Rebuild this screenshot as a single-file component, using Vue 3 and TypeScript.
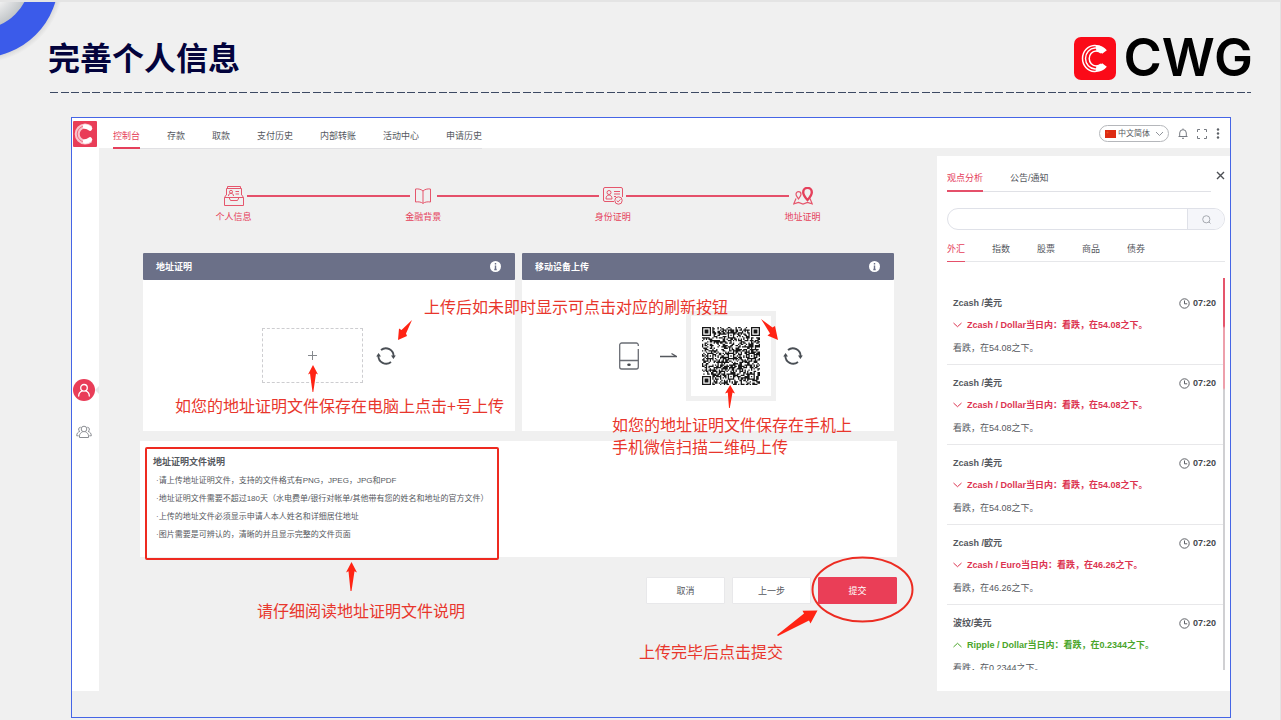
<script setup lang="ts">
import { ref } from 'vue'

interface Insight {
  id: number
  pair: string
  time: string
  headline: string
  detail: string
  up: boolean
}

const navItems: string[] = ['控制台', '存款', '取款', '支付历史', '内部转账', '活动中心', '申请历史']
const activeNav = ref(0)
const language = ref('zh')
const query = ref('')

const panelTabs: string[] = ['观点分析', '公告/通知']
const activePanelTab = ref(0)
const categories: string[] = ['外汇', '指数', '股票', '商品', '债券']
const activeCategory = ref(0)

const steps: { icon: string; label: string }[] = [
  { icon: 'profile', label: '个人信息' },
  { icon: 'book', label: '金融背景' },
  { icon: 'idcard', label: '身份证明' },
  { icon: 'map', label: '地址证明' },
]

const notes: string[] = [
  '请上传地址证明文件，支持的文件格式有PNG，JPEG，JPG和PDF',
  '地址证明文件需要不超过180天（水电费单/银行对帐单/其他带有您的姓名和地址的官方文件）',
  '上传的地址文件必须显示申请人本人姓名和详细居住地址',
  '图片需要是可辨认的，清晰的并且显示完整的文件页面',
]

const insights: Insight[] = [
  { id: 1, pair: 'Zcash /美元', time: '07:20', headline: 'Zcash / Dollar当日内：看跌，在54.08之下。', detail: '看跌，在54.08之下。', up: false },
  { id: 2, pair: 'Zcash /美元', time: '07:20', headline: 'Zcash / Dollar当日内：看跌，在54.08之下。', detail: '看跌，在54.08之下。', up: false },
  { id: 3, pair: 'Zcash /美元', time: '07:20', headline: 'Zcash / Dollar当日内：看跌，在54.08之下。', detail: '看跌，在54.08之下。', up: false },
  { id: 4, pair: 'Zcash /欧元', time: '07:20', headline: 'Zcash / Euro当日内：看跌，在46.26之下。', detail: '看跌，在46.26之下。', up: false },
  { id: 5, pair: '波纹/美元', time: '07:20', headline: 'Ripple / Dollar当日内：看跌，在0.2344之下。', detail: '看跌，在0.2344之下。', up: true },
]

// Square code of 45 modules: three finders, alignment marks, filled data area.
function buildCode(): string {
  const n = 45
  const grid: boolean[][] = []
  let seed = 20117
  for (let y = 0; y < n; y++) {
    grid.push([])
    for (let x = 0; x < n; x++) {
      seed = (seed * 48271) % 2147483647
      grid[y].push(seed / 2147483647 > 0.48)
    }
  }
  const stamp = (cx: number, cy: number, radius: number, isDark: (d: number) => boolean) => {
    for (let y = cy - radius; y <= cy + radius; y++) {
      for (let x = cx - radius; x <= cx + radius; x++) {
        if (x < 0 || y < 0 || x >= n || y >= n) continue
        grid[y][x] = isDark(Math.max(Math.abs(x - cx), Math.abs(y - cy)))
      }
    }
  }
  for (const [x, y] of [[22, 6], [6, 22], [22, 22], [38, 22], [22, 38], [38, 38]]) {
    stamp(x, y, 2, (d) => d !== 1)
  }
  for (const [x, y] of [[3, 3], [41, 3], [3, 41]]) {
    stamp(x, y, 4, (d) => d < 2 || d === 3)
  }
  let path = ''
  grid.forEach((row, y) => row.forEach((dark, x) => {
    if (dark) path += `M${x} ${y}h1v1h-1z`
  }))
  return path
}
const codePath = buildCode()
</script>

<template>
  <div class="slide">
    <svg class="ring" width="72" height="72" viewBox="0 0 72 72" aria-hidden="true">
      <defs>
        <radialGradient id="ringInner" gradientUnits="userSpaceOnUse" cx="-19" cy="-22" r="48">
          <stop offset="0.6" stop-color="#f0f0f0" />
          <stop offset="1" stop-color="#c2c6c9" />
        </radialGradient>
        <radialGradient id="ringOuter" gradientUnits="userSpaceOnUse" cx="-19" cy="-22" r="83">
          <stop offset="0.92" stop-color="#d6d6d6" />
          <stop offset="1" stop-color="#f0f0f0" />
        </radialGradient>
      </defs>
      <circle cx="-19" cy="-22" r="83" fill="url(#ringOuter)" />
      <circle cx="-19" cy="-22" r="50" fill="url(#ringInner)" />
      <circle cx="-19" cy="-22" r="63" fill="none" stroke="#3b5bea" stroke-width="29" />
    </svg>

    <header class="slide-head">
      <h1>完善个人信息</h1>
      <div class="brand">
        <svg width="42" height="43" viewBox="0 0 42 43" aria-hidden="true">
          <rect width="42" height="43" rx="7" fill="#fb0a18" />
          <g fill="none" stroke="#fff">
            <path d="M29 31.500A12.500 13 0 1 1 29 11.500" stroke-width="1.500" />
            <path d="M28 29.500A10 10.500 0 1 1 28 13.500" stroke-width="1.400" />
            <path d="M27 27A7 7.500 0 1 1 27 16" stroke-width="1.500" />
            <path d="M22 11.500C25.500 11 28.500 12.500 30.500 15M22 31.500C25.500 32 28.500 30.500 30.500 28" stroke-width="6" />
          </g>
        </svg>
        <span class="wordmark">CWG</span>
      </div>
    </header>
    <div class="rule"></div>

    <div class="window">
      <aside class="rail">
        <svg width="24" height="26" viewBox="0 0 24 26" aria-hidden="true">
          <rect width="24" height="26" rx="1" fill="#e93d58" />
          <path d="M17.500 7A8 8 0 1 0 17.500 19" fill="none" stroke="#f9c3cc" stroke-width="5" />
          <path d="M17.500 7A8 8 0 1 0 17.500 19" fill="none" stroke="#ee6b80" stroke-width="1" />
          <path d="M12 5.500A8 8 0 0 1 17 7.500M12 20.500A8 8 0 0 0 17 18.500" fill="none" stroke="#fff" stroke-width="4.500" stroke-linecap="round" />
        </svg>
        <button class="rail-btn active" type="button" aria-label="个人">
          <svg width="14" height="14" viewBox="0 0 14 14" fill="none" stroke="#fff" stroke-width="1.300">
            <circle cx="7" cy="4.800" r="3.300" />
            <path d="M1.700 13c0-3 1.800-4.600 3.500-5.200M12.300 13c0-3-1.800-4.600-3.500-5.200" stroke-linecap="round" />
          </svg>
        </button>
        <button class="rail-btn" type="button" aria-label="团队">
          <svg width="16" height="14" viewBox="0 0 16 14" fill="none" stroke="#8b8e93" stroke-width="1">
            <circle cx="8" cy="4" r="2.800" />
            <path d="M3.500 12.500v-1.700c0-2 1.500-3.300 3-3.800M12.500 12.500v-1.700c0-2-1.500-3.300-3-3.800M3.500 12.500h9" />
            <path d="M4.700 2.200a2.200 2.200 0 0 0-.8 4.200C2 7 .7 8.300.7 10.800h2M11.300 2.200a2.200 2.200 0 0 1 .8 4.200c1.900.6 3.200 1.900 3.200 4.400h-2" />
          </svg>
        </button>
      </aside>

      <div class="main">
        <div class="topbar">
          <nav class="nav">
            <a v-for="(item, i) in navItems" :key="item" href="#" :class="{ on: i === activeNav }" @click.prevent="activeNav = i">{{ item }}</a>
          </nav>
          <div class="tools">
            <label class="lang">
              <svg width="11" height="8" viewBox="0 0 11 8" aria-hidden="true">
                <rect width="11" height="8" fill="#dd2c14" />
                <circle cx="2.500" cy="2.500" r="1" fill="#e8541a" />
              </svg>
              <select v-model="language" aria-label="语言">
                <option value="zh">中文简体</option>
              </select>
              <svg width="9" height="6" viewBox="0 0 9 6" fill="none" stroke="#8f9399" aria-hidden="true"><path d="M1 1l3.500 3.500L8 1" /></svg>
            </label>
            <button type="button" aria-label="提醒">
              <svg width="10" height="11" viewBox="0 0 10 11" fill="none" stroke="#777b82"><path d="M.5 8.500h9M1.700 8.500V5a3.300 3.300 0 0 1 6.600 0v3.500M5 .5v1M4 10.300h2" /></svg>
            </button>
            <button type="button" aria-label="全屏">
              <svg width="10" height="10" viewBox="0 0 10 10" fill="none" stroke="#777b82"><path d="M.5 3V.5H3M7 .5h2.500V3M9.500 7v2.500H7M3 9.500H.5V7" /></svg>
            </button>
            <button type="button" aria-label="更多">
              <svg width="4" height="11" viewBox="0 0 4 11" fill="#5c6066"><circle cx="2" cy="1.500" r="1.200" /><circle cx="2" cy="5.500" r="1.200" /><circle cx="2" cy="9.500" r="1.200" /></svg>
            </button>
          </div>
        </div>

        <div class="workspace">
          <main class="center">
            <ol class="steps">
              <li v-for="step in steps" :key="step.label">
                <span class="step-icon">
                  <svg v-if="step.icon === 'profile'" width="20" height="20" viewBox="0 0 20 20" fill="none" stroke="#e5566c">
                    <path d="M2.500 9V2.500h15V9M3.500 2V.5h13V2" />
                    <circle cx="7" cy="5.800" r="1.500" /><path d="M4.500 10c0-1.700 1-2.700 2.500-2.700S9.500 8.300 9.500 10M11.500 5.500h3.500M11.500 8h3.500" />
                    <path d="M.5 11.500L2.500 8.500M19.500 11.500L17.500 8.500M.5 11.500h4.500l1.500 3h7l1.500-3h4.500v8H.5zM5 11.500h10" />
                  </svg>
                  <svg v-else-if="step.icon === 'book'" width="18" height="18" viewBox="0 0 18 18" fill="none" stroke="#e5566c">
                    <path d="M9 4v12M9 4C7.500 2.500 4.500 1.500 1.500 2v13c3-.5 6 0 7.500 1.500M9 4c1.500-1.500 4.500-2.500 7.500-2v13c-3-.5-6 0-7.500 1.500" />
                  </svg>
                  <svg v-else-if="step.icon === 'idcard'" width="20" height="18" viewBox="0 0 20 18" fill="none" stroke="#e5566c">
                    <path d="M11 14.500H2a1.500 1.500 0 0 1-1.500-1.500V2A1.500 1.500 0 0 1 2 .5h16A1.500 1.500 0 0 1 19.500 2v8" />
                    <circle cx="6" cy="5.500" r="2" /><path d="M3 12c0-2.500 1.200-4 3-4s3 1.500 3 4zM11 4.500h6M11 7h6M11 9.500h2" />
                    <circle cx="15.500" cy="13.500" r="3.700" /><path d="M13.700 13.500l1.400 1.400 2.300-2.500" />
                  </svg>
                  <svg v-else width="20" height="18" viewBox="0 0 20 18" fill="none" stroke="#e5566c">
                    <path d="M3 11.500L.8 16.800l4.700-1.300 4.500 1.600 4.500-1.600 4.700 1.300-2.200-5.300" stroke-width="1.200" />
                    <path d="M5.500 12C4 9.800 3 8.700 3 7.200a2.500 2.500 0 0 1 5 0c0 1.500-1 2.600-2.500 4.800z" stroke-width="1.200" />
                    <path d="M14.500 13C11.500 9.700 10.200 7.700 10.200 5.200a4.300 4.300 0 0 1 8.600 0c0 2.500-1.300 4.500-4.300 7.800z" stroke="#e5405b" stroke-width="2.400" />
                  </svg>
                </span>
                <span class="step-line"></span>
                <span class="step-label">{{ step.label }}</span>
              </li>
            </ol>

            <div class="cards">
              <section class="card">
                <div class="card-head">
                  <h2>地址证明</h2>
                  <svg width="11" height="11" viewBox="0 0 11 11" aria-hidden="true"><circle cx="5.500" cy="5.500" r="5.500" fill="#fff" /><path d="M5.500 2v1.500M5.500 4.500v4M4.300 8.500h2.400" stroke="#6b7088" stroke-width="1.400" /></svg>
                </div>
                <div class="card-body">
                  <button class="drop" type="button" aria-label="上传文件">
                    <svg width="9" height="9" viewBox="0 0 9 9" stroke="#85888d"><path d="M4.500 0v9M0 4.500h9" /></svg>
                  </button>
                  <button class="refresh" type="button" aria-label="刷新">
                    <svg width="20" height="18" viewBox="0 0 20 18" fill="none" stroke="#4a4f55" stroke-width="1.900">
                      <path d="M5 3A7.800 7.800 0 0 1 17.600 9.500M15 15A7.800 7.800 0 0 1 2.400 8.500" />
                      <path d="M15 8.500h4.800l-2.400 3.500zM.2 9.500h4.800L2.600 6z" fill="#4a4f55" stroke="none" />
                    </svg>
                  </button>
                </div>
                <p class="tip tip-refresh">上传后如未即时显示可点击对应的刷新按钮</p>
                <svg class="mark mark-refresh" width="15" height="20" viewBox="0 0 15 20" aria-hidden="true"><path d="M14 0L8 13.500 9 16 0 20 1 8.500l2.500 1.500z" fill="#ff2414" /></svg>
                <svg class="mark mark-drop" width="10" height="27" viewBox="0 0 10 27" aria-hidden="true"><path d="M5 0l5 9.500-2-1L5.300 27h-.8L2 8.500 0 9.500z" fill="#ff2414" /></svg>
                <p class="tip tip-drop">如您的地址证明文件保存在电脑上点击+号上传</p>
              </section>

              <section class="card">
                <div class="card-head">
                  <h2>移动设备上传</h2>
                  <svg width="11" height="11" viewBox="0 0 11 11" aria-hidden="true"><circle cx="5.500" cy="5.500" r="5.500" fill="#fff" /><path d="M5.500 2v1.500M5.500 4.500v4M4.300 8.500h2.400" stroke="#6b7088" stroke-width="1.400" /></svg>
                </div>
                <div class="card-body mobile">
                  <svg class="phone" width="20" height="28" viewBox="0 0 20 28" fill="none" stroke="#6a6d74" stroke-width="1.300" aria-hidden="true">
                    <path d="M19.300 4V3a2 2 0 0 0-2-2H2.700a2 2 0 0 0-2 2v22a2 2 0 0 0 2 2h14.600a2 2 0 0 0 2-2V7M.7 18.500h18.600" />
                    <ellipse cx="10" cy="22.800" rx="1.800" ry="1.300" fill="#44474c" stroke="none" />
                  </svg>
                  <svg class="hint" width="17" height="8" viewBox="0 0 17 8" fill="none" stroke="#55585e" stroke-width="1.300" aria-hidden="true"><path d="M0 4.500h16.500L11.500 1.500" /></svg>
                  <div class="code">
                    <svg width="58" height="58" viewBox="0 0 45 45" role="img" aria-label="二维码"><path :d="codePath" fill="#161616" /></svg>
                    <svg class="mark mark-code" width="10" height="23" viewBox="0 0 10 23" aria-hidden="true"><path d="M5.200 0L10 8.500l-2.500-1L4.800 23H4L2.800 7.500 0 8.500z" fill="#ff2414" /></svg>
                  </div>
                  <button class="refresh" type="button" aria-label="刷新">
                    <svg width="20" height="18" viewBox="0 0 20 18" fill="none" stroke="#4a4f55" stroke-width="1.900">
                      <path d="M5 3A7.800 7.800 0 0 1 17.600 9.500M15 15A7.800 7.800 0 0 1 2.400 8.500" />
                      <path d="M15 8.500h4.800l-2.400 3.500zM.2 9.500h4.800L2.600 6z" fill="#4a4f55" stroke="none" />
                    </svg>
                  </button>
                </div>
                <svg class="mark mark-reload" width="18" height="21" viewBox="0 0 18 21" aria-hidden="true"><path d="M0 0l11.500 8.500L14 7l3 14-10.500-4.500L9 14.500z" fill="#ff2414" /></svg>
                <p class="tip tip-code">如您的地址证明文件保存在手机上<br />手机微信扫描二维码上传</p>
              </section>
            </div>

            <section class="notes">
              <h3>地址证明文件说明</h3>
              <ul>
                <li v-for="note in notes" :key="note">·{{ note }}</li>
              </ul>
              <div class="outline">
                <svg class="mark mark-notes" width="11" height="29" viewBox="0 0 11 29" aria-hidden="true"><path d="M5.500 0L11 10.500l-2.500-1.300L5.500 29h-1L2.500 9.200 0 10.500z" fill="#ff2414" /></svg>
                <p class="tip tip-notes">请仔细阅读地址证明文件说明</p>
              </div>
            </section>

            <div class="actions">
              <button type="button">取消</button>
              <button type="button">上一步</button>
              <div class="submit">
                <button class="primary" type="submit">提交</button>
                <svg class="mark mark-ellipse" width="103" height="67" viewBox="0 0 103 67" aria-hidden="true"><ellipse cx="51.500" cy="33.500" rx="50" ry="32" fill="none" stroke="#ec2c22" stroke-width="2" /></svg>
                <svg class="mark mark-submit" width="41" height="26" viewBox="0 0 41 26" aria-hidden="true"><path d="M0 25L27 3.500 25.500.8 40.500.5 33.500 13.500 32 10.500 1 26z" fill="#ff2414" /></svg>
                <p class="tip tip-submit">上传完毕后点击提交</p>
              </div>
            </div>
          </main>

          <aside class="panel">
            <button class="close" type="button" aria-label="关闭">
              <svg width="9" height="9" viewBox="0 0 9 9" stroke="#4c4f54" stroke-width="1.400"><path d="M1 1l7 7M8 1L1 8" /></svg>
            </button>
            <div class="panel-tabs" role="tablist">
              <button v-for="(tab, i) in panelTabs" :key="tab" type="button" role="tab" :class="{ on: i === activePanelTab }" @click="activePanelTab = i">{{ tab }}</button>
            </div>
            <form class="search" @submit.prevent>
              <input v-model="query" type="text" aria-label="搜索" />
              <button type="submit" aria-label="搜索">
                <svg width="9" height="9" viewBox="0 0 9 9" fill="none" stroke="#a6a9b0"><circle cx="4.300" cy="4.300" r="3.600" /><path d="M6.800 6.800L8.500 8.500" /></svg>
              </button>
            </form>
            <div class="categories" role="tablist">
              <button v-for="(cat, i) in categories" :key="cat" type="button" role="tab" :class="{ on: i === activeCategory }" @click="activeCategory = i">{{ cat }}</button>
            </div>
            <div class="feed">
              <ul>
                <li v-for="item in insights" :key="item.id">
                  <div class="feed-head">
                    <strong>{{ item.pair }}</strong>
                    <time>
                      <svg width="11" height="11" viewBox="0 0 11 11" fill="none" stroke="#5c5f65"><circle cx="5.500" cy="5.500" r="4.700" /><path d="M5.500 2.500v3.300h2.700" /></svg>
                      {{ item.time }}
                    </time>
                  </div>
                  <p class="headline" :class="{ up: item.up }">
                    <svg width="9" height="6" viewBox="0 0 9 6" fill="none" stroke="currentColor">
                      <path :d="item.up ? 'M.5 5l4-3.700 4 3.700' : 'M.5 1l4 3.700 4-3.700'" />
                    </svg>
                    {{ item.headline }}
                  </p>
                  <p class="detail">{{ item.detail }}</p>
                </li>
              </ul>
              <span class="track"></span>
            </div>
          </aside>
        </div>
      </div>
    </div>
  </div>
</template>

<style>
body {
  margin: 0;
  background: #f0f0f0;
}
</style>

<style scoped>
.slide {
  position: relative;
  box-sizing: border-box;
  min-height: 100vh;
  display: flex;
  flex-direction: column;
  padding-bottom: 2px;
  overflow: hidden;
  border-top: 2px solid #e4e4e4;
  border-right: 1px solid #e2e2e2;
  background: #f0f0f0;
  color: #55585e;
  font-family: "Liberation Sans", "Noto Sans CJK SC", sans-serif;
  font-size: 9px;
  line-height: 14px;
}
h1, h2, h3, p, ul, ol {
  margin: 0;
  padding: 0;
}
ul, ol {
  list-style: none;
}
svg {
  display: block;
  flex: none;
}
a {
  color: inherit;
  text-decoration: none;
}
button, input, select {
  margin: 0;
  padding: 0;
  border: 0;
  background: none;
  color: inherit;
  font: inherit;
}
.ring {
  position: absolute;
  top: 0;
  left: 0;
}
.slide-head {
  display: flex;
  justify-content: space-between;
  align-items: center;
  height: 90px;
  box-sizing: border-box;
  padding: 22px 27px 0 48px;
}
h1 {
  padding-top: 2px;
  color: #03033c;
  font-size: 32px;
  line-height: 44px;
  font-weight: 700;
}
.brand {
  display: flex;
  align-items: center;
  gap: 8px;
}
.wordmark {
  color: #000;
  font-family: Inter, sans-serif;
  font-size: 52px;
  line-height: 44px;
  font-weight: 600;
}
.rule {
  height: 1px;
  margin: 0 29px 0 50px;
  background: repeating-linear-gradient(90deg, #3c4963 0 8px, transparent 8px 11px, #3c4963 11px 19px, transparent 19px 21px);
}
.window {
  flex: 1;
  display: flex;
  margin: 24px 49px 0 71px;
  padding-bottom: 26px;
  border: 1px solid #4565e6;
  background: #f0f0f0;
}
.rail {
  flex: none;
  width: 27px;
  display: flex;
  flex-direction: column;
  align-items: flex-start;
  box-sizing: border-box;
  padding: 3px 0 0 1px;
  background: #fff;
}
.rail-btn {
  width: 22px;
  height: 22px;
  display: grid;
  place-items: center;
  border-radius: 50%;
}
.rail-btn.active {
  position: relative;
  margin: 232px 0 20px;
  background: #e93d58;
}
.rail-btn.active::after {
  content: "";
  position: absolute;
  left: 22px;
  top: 7px;
  border: 4px solid transparent;
  border-right-color: #e6e6e8;
  border-left: 0;
}
.main {
  flex: 1;
  min-width: 0;
  display: flex;
  flex-direction: column;
}
.topbar {
  display: flex;
  justify-content: space-between;
  height: 31px;
  padding: 0 10px 0 14px;
  background: linear-gradient(#fff 30px, transparent 30px);
}
.nav {
  display: flex;
  gap: 27px;
  border-bottom: 1px solid #e0e0e3;
}
.nav a {
  padding-top: 11px;
}
.nav .on {
  margin-bottom: -1px;
  border-bottom: 2px solid #e5405b;
  color: #e5405b;
}
.tools {
  display: flex;
  align-items: center;
  gap: 9px;
}
.lang {
  display: flex;
  align-items: center;
  gap: 2px;
  height: 15px;
  padding: 0 4px 0 5px;
  border: 1px solid #b5b7bb;
  border-radius: 9px;
}
.lang select {
  appearance: none;
  width: 35px;
  font-size: 8px;
}
.workspace {
  flex: 1;
  display: flex;
}
.center {
  flex: 1;
  min-width: 0;
}
.steps {
  display: flex;
  margin: 36px 116px 29px 116px;
  color: #e5405b;
}
.steps li {
  flex: 1;
  display: grid;
  grid-template-columns: 37px 1fr;
  align-items: center;
  row-gap: 3px;
}
.steps li:last-child {
  flex: none;
  grid-template-columns: 37px;
}
.steps li:last-child .step-line {
  display: none;
}
.step-icon {
  height: 22px;
  display: grid;
  place-items: center;
}
.step-line {
  height: 2px;
  margin: 0 -5px;
  background: #e5506a;
}
.step-label {
  text-align: center;
}
.cards {
  display: grid;
  grid-template-columns: 1fr 1fr;
  gap: 7px;
  margin: 0 43px 10px 44px;
}
.card {
  position: relative;
  background: #fff;
}
.card-head {
  display: flex;
  align-items: center;
  justify-content: space-between;
  height: 27px;
  padding: 0 14px 0 13px;
  border-radius: 1px;
  background: #6b7088;
  color: #fff;
}
.card-head h2 {
  font-size: 9px;
  line-height: 14px;
}
.card-body {
  display: flex;
  align-items: center;
  justify-content: center;
  gap: 13px;
  height: 151px;
}
.card-body.mobile {
  gap: 0;
  padding-left: 6px;
}
.drop {
  width: 101px;
  height: 55px;
  display: grid;
  place-items: center;
  border: 1px dashed #cdcdd0;
}
.hint {
  margin: 0 9px 0 21px;
}
.code {
  position: relative;
  margin-right: 7px;
  padding: 11px;
  border: 5px solid #f0f0f0;
  background: #fff;
}
.tip {
  position: absolute;
  z-index: 2;
  color: #e8362c;
  font-family: "Noto Sans CJK SC", sans-serif;
  font-size: 16px;
  line-height: 22px;
  white-space: nowrap;
}
.mark {
  position: absolute;
  z-index: 2;
}
.tip-refresh {
  left: 281px;
  top: 42px;
}
.mark-refresh {
  left: 255px;
  top: 67px;
}
.mark-drop {
  left: 165px;
  top: 112px;
}
.tip-drop {
  left: 32px;
  top: 141px;
}
.mark-code {
  left: 34px;
  top: 69px;
}
.mark-reload {
  left: 239px;
  top: 66px;
}
.tip-code {
  left: 90px;
  top: 160px;
}
.notes {
  position: relative;
  box-sizing: border-box;
  min-height: 116px;
  margin: 0 40px 20px 41px;
  padding: 12px 13px;
  background: #fff;
}
.notes h3 {
  font-size: 9px;
  line-height: 18px;
}
.notes ul {
  padding-top: 1px;
}
.notes li {
  padding-left: 3px;
  font-size: 8px;
  line-height: 18px;
}
.outline {
  position: absolute;
  left: 5px;
  top: 6px;
  width: 350px;
  height: 109px;
  border: 2px solid #ee2a20;
  border-radius: 2px;
}
.mark-notes {
  left: 199px;
  top: 113px;
}
.tip-notes {
  left: 110px;
  top: 150px;
}
.actions {
  display: flex;
  justify-content: flex-end;
  gap: 7px;
  margin-right: 40px;
}
.actions button {
  box-sizing: border-box;
  width: 79px;
  height: 27px;
  border: 1px solid #e8e8ea;
  border-radius: 1px;
  background: #fff;
}
.actions .primary {
  border-color: #ea3e57;
  background: #ea3e57;
  color: #fff;
}
.submit {
  position: relative;
}
.mark-ellipse {
  left: -7px;
  top: -21px;
}
.mark-submit {
  left: -41px;
  top: 33px;
}
.tip-submit {
  right: 114px;
  top: 63px;
}
.panel {
  position: relative;
  flex: none;
  width: 293px;
  box-sizing: border-box;
  display: flex;
  flex-direction: column;
  margin-top: 7px;
  padding: 15px 5px 20px 10px;
  background: #fff;
}
.close {
  position: absolute;
  right: 5px;
  top: 15px;
}
.panel-tabs {
  display: flex;
  gap: 27px;
  height: 20px;
  margin-right: 14px;
  border-bottom: 1px solid #e0e1e6;
}
.panel-tabs button, .categories button {
  margin-bottom: -1px;
  padding-bottom: 5px;
  border-bottom: 2px solid transparent;
}
.panel-tabs .on, .categories .on {
  border-bottom-color: #e5506a;
  color: #e5405b;
}
.search {
  display: flex;
  box-sizing: border-box;
  height: 22px;
  margin: 16px 0 11px;
  overflow: hidden;
  border: 1px solid #dfe1e8;
  border-radius: 11px;
}
.search input {
  flex: 1;
  min-width: 0;
  padding: 0 10px;
  outline: none;
}
.search button {
  width: 37px;
  display: grid;
  place-items: center;
  border-left: 1px solid #dfe1e8;
  background: #f5f6fa;
}
.categories {
  display: flex;
  gap: 27px;
  height: 20px;
  border-bottom: 1px solid #e6e7ea;
}
.categories button {
  border-bottom-width: 1px;
}
.feed {
  flex: none;
  display: flex;
  height: 392px;
  margin-top: 16px;
  overflow: hidden;
}
.feed ul {
  flex: 1;
  padding-top: 7px;
}
.feed li {
  box-sizing: border-box;
  height: 80px;
  padding: 11px 7px 0 6px;
  border-bottom: 1px solid #e8e8ea;
}
.feed-head, .feed time, .headline {
  display: flex;
  align-items: center;
}
.feed-head {
  justify-content: space-between;
}
.feed time {
  gap: 3px;
  color: #45484d;
  font-weight: 700;
}
.headline {
  gap: 5px;
  margin: 8px 0 9px;
  color: #dc3350;
  font-weight: 700;
}
.headline.up {
  color: #4aa52a;
}
.track {
  flex: none;
  width: 2px;
  background: linear-gradient(#e5556c 48px, #eda0ac 50px, #eda0ac 110px, #d0d0d3 112px);
}
</style>
